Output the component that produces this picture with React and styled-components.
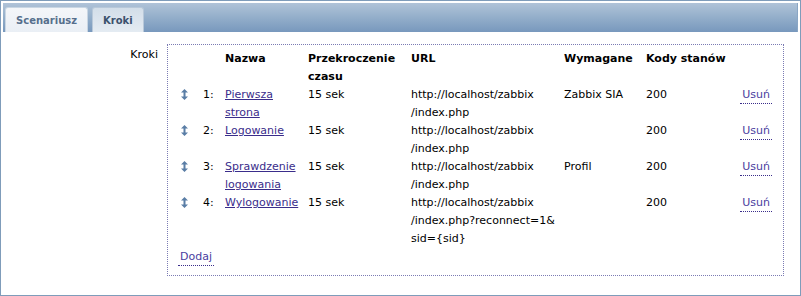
import React from "react";
import styled, { createGlobalStyle } from "styled-components";

const Global = createGlobalStyle`
  html, body { margin: 0; padding: 0; background: #fff; }
  body { font-family: "DejaVu Sans", Verdana, sans-serif; font-size: 11px; color: #000; }
`;

const Frame = styled.div`
  box-sizing: border-box;
  width: 801px;
  height: 296px;
  border: 1px solid #7f9cba;
  padding: 2px;
  display: flex;
  flex-direction: column;
`;

const TabBar = styled.div`
  height: 29px;
  background: linear-gradient(to bottom, #b0c3d8 0%, #93aeca 50%, #7898bd 100%);
  border-right: 1px solid #8aa6c4;
  display: flex;
  align-items: flex-end;
  gap: 4px;
  padding-left: 2px;
`;

const Tab = styled.div`
  box-sizing: border-box;
  height: 25px;
  padding: 0 10px;
  display: flex;
  align-items: center;
  font-weight: bold;
  font-size: 10px;
  border: 1px solid ${(p) => (p.$active ? "#b8c8d9" : "#c9d6e3")};
  border-bottom: none;
  border-radius: 3px 3px 0 0;
  background: ${(p) =>
    p.$active
      ? "linear-gradient(to bottom, #d3dee9, #e4ebf2)"
      : "linear-gradient(to bottom, #f4f6f9, #eaeff5)"};
  color: ${(p) => (p.$active ? "#3b516d" : "#566f8c")};
`;

const Content = styled.div`
  flex: 1;
  display: grid;
  grid-template-columns: 155px 617px;
  column-gap: 9px;
  align-items: start;
  padding-top: 12px;
`;

const Label = styled.div`
  text-align: right;
  line-height: 18px;
  padding-top: 2px;
`;

const Box = styled.div`
  box-sizing: border-box;
  width: 617px;
  height: 232px;
  border: 1px dotted #7b7bb3;
  padding: 5px 9px 0 13px;
`;

const Table = styled.table`
  border-collapse: collapse;
  table-layout: fixed;
  width: 591px;
`;

const Th = styled.th`
  font-weight: bold;
  text-align: left;
  vertical-align: top;
  line-height: 18px;
  padding: 0;
  font-size: 11px;
`;

const Td = styled.td`
  vertical-align: top;
  line-height: 18px;
  padding: 0;
  text-align: ${(p) => (p.$right ? "right" : "left")};
`;

const Link = styled.a`
  color: #3a2d8b;
  text-decoration: underline;
  cursor: pointer;
`;

const ActionLink = styled.a`
  color: #4a3ea0;
  text-decoration: none;
  border-bottom: 1px dotted #3a2d8b;
  padding: 0 2px 2px;
  cursor: pointer;
`;

const AddRow = styled.div`
  line-height: 18px;
  margin-left: -3px;
`;

const Drag = () => (
  <svg width="7" height="11" viewBox="0 0 7 11" style={{ marginTop: 3 }}>
    <path d="M3.5 0 L7 3.5 L4.5 3.5 L4.5 7.5 L7 7.5 L3.5 11 L0 7.5 L2.5 7.5 L2.5 3.5 L0 3.5 Z" fill="#5a7ea6" />
  </svg>
);

const steps = [
  { n: 1, name: ["Pierwsza", "strona"], url: ["http://localhost/zabbix", "/index.php"], req: "Zabbix SIA" },
  { n: 2, name: ["Logowanie"], url: ["http://localhost/zabbix", "/index.php"], req: "" },
  { n: 3, name: ["Sprawdzenie", "logowania"], url: ["http://localhost/zabbix", "/index.php"], req: "Profil" },
  { n: 4, name: ["Wylogowanie"], url: ["http://localhost/zabbix", "/index.php?reconnect=1&", "sid={sid}"], req: "" },
];

const Lines = ({ lines }) =>
  lines.map((l, i) => (
    <React.Fragment key={i}>
      {i > 0 && <br />}
      {l}
    </React.Fragment>
  ));

export default function App() {
  return (
    <>
      <Global />
      <Frame>
        <TabBar>
          <Tab>Scenariusz</Tab>
          <Tab $active>Kroki</Tab>
        </TabBar>
        <Content>
          <Label>Kroki</Label>
          <Box>
            <Table>
              <colgroup>
                <col style={{ width: 22 }} />
                <col style={{ width: 22 }} />
                <col style={{ width: 83 }} />
                <col style={{ width: 103 }} />
                <col style={{ width: 153 }} />
                <col style={{ width: 82 }} />
                <col style={{ width: 86 }} />
                <col style={{ width: 40 }} />
              </colgroup>
              <thead>
                <tr>
                  <Th />
                  <Th />
                  <Th>Nazwa</Th>
                  <Th>Przekroczenie<br />czasu</Th>
                  <Th>URL</Th>
                  <Th>Wymagane</Th>
                  <Th>Kody stanów</Th>
                  <Th />
                </tr>
              </thead>
              <tbody>
                {steps.map((s) => (
                  <tr key={s.n}>
                    <Td><Drag /></Td>
                    <Td>{s.n}:</Td>
                    <Td>
                      <Link>
                        <Lines lines={s.name} />
                      </Link>
                    </Td>
                    <Td>15 sek</Td>
                    <Td><Lines lines={s.url} /></Td>
                    <Td>{s.req}</Td>
                    <Td>200</Td>
                    <Td $right><ActionLink>Usuń</ActionLink></Td>
                  </tr>
                ))}
              </tbody>
            </Table>
            <AddRow>
              <ActionLink>Dodaj</ActionLink>
            </AddRow>
          </Box>
        </Content>
      </Frame>
    </>
  );
}
